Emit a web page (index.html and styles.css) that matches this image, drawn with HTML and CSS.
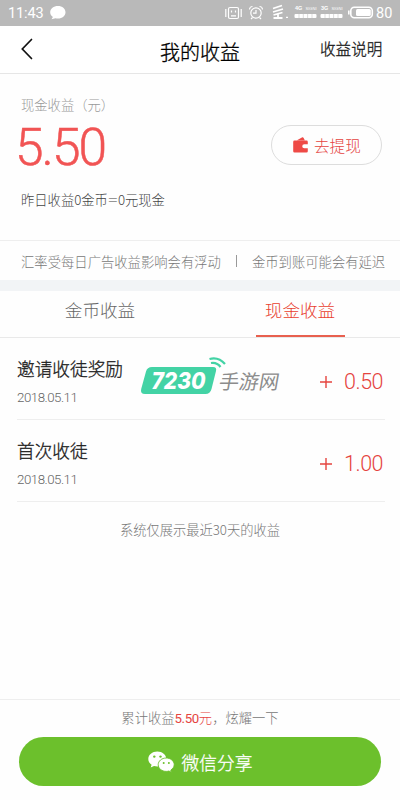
FILE: index.html
```html
<!DOCTYPE html>
<html lang="zh-CN">
<head>
<meta charset="utf-8">
<title>我的收益</title>
<link rel="stylesheet" href="styles.css">
</head>
<body>
<div class="status">
  <span class="time">11:43</span>
  <svg class="bubble" width="16" height="14" viewBox="0 0 16 14"><path fill="#fff" d="M8 0C3.600 0 .2 2.700 .2 6.200c0 2 1 3.700 2.700 4.800L1.500 13.200l4-1c.8.200 1.600.3 2.500.3 4.300 0 7.500-2.800 7.500-6.300S12.300 0 8 0z"/></svg>
  <svg class="icons" width="157" height="20" viewBox="0 0 157 20" fill="none" stroke="#fff" stroke-width="1.200">
    <rect x="3.500" y="7.500" width="10" height="11" rx="1.500"/>
    <path d="M.8 9v8M16.200 9v8M6.500 10.500v2M10.500 10.500v2M6 15.800h5"/>
    <circle cx="31" cy="13" r="5.200"/>
    <path d="M31 10v3.200h-3M24.500 9.500a3 3 0 0 1 3-3M37.500 9.500a3 3 0 0 0-3-3M27.500 17.500l-1.500 1.500M34.500 17.500l1.500 1.500"/>
    <path stroke-width="1.800" d="M48 8.500l9-3M48 12l10-3M48.500 15l9-2.500M53 14v4M48.500 18h9"/>
    <path d="M61 17.300h2"/>
    <g fill="#fff" stroke="none"><text x="70" y="10" class="net">4G</text><text x="80.500" y="10" class="sig" textLength="11">SIGNI</text><text x="96" y="10" class="net">3G</text><text x="106.500" y="10" class="sig" textLength="11">SIGNI</text>
      <rect x="69.500" y="14" width="22" height="4" rx="1"/><rect x="95.500" y="14" width="22" height="4" rx="1"/></g>
    <path stroke="#b9b9b9" stroke-width=".5" d="M74 14v4M78.300 14v4M82.600 14v4M87 14v4M100 14v4M104.300 14v4M108.600 14v4M113 14v4"/>
    <rect x="125.800" y="7.300" width="21.500" height="10.400" rx="3.500" stroke-width="1.600"/>
    <rect x="131" y="9" width="14.800" height="7" rx="1.500" fill="#fff" stroke="none"/>
    <path d="M123.800 10.500v4" stroke-width="1.600"/>
  </svg>
  <span class="pct">80</span>
</div>
<header class="nav">
  <svg class="back" width="12" height="22" viewBox="0 0 12 22"><path d="M10.500 1.500L1.300 11l9.200 9.500" fill="none" stroke="#111" stroke-width="1.700" stroke-linecap="round"/></svg>
  <h1>我的收益</h1>
  <a class="help">收益说明</a>
</header>
<section class="balance">
  <div>
    <div class="label">现金收益（元）</div>
    <div class="amount">5.50</div>
    <div class="yesterday">昨日收益<i>0</i>金币<i class="eq">=</i><i>0</i>元现金</div>
  </div>
  <a class="withdraw">
    <svg width="15" height="16" viewBox="0 0 15 16"><path fill="#ee4a46" d="M4 3.200L9.300.3q.8-.3 1.200.4l1.300 2.500zM1.500 3.600h12q1.300 0 1.300 1.300v2.300h-3.500a2 2 0 0 0 0 4.100h3.500v2.900q0 1.300-1.300 1.300h-12Q.2 15.500.2 14.200V4.900q0-1.300 1.300-1.300z"/></svg>
    <span>去提现</span>
  </a>
</section>
<div class="notice"><span>汇率受每日广告收益影响会有浮动</span><b></b><span>金币到账可能会有延迟</span></div>
<nav class="tabs"><div class="tab"><span>金币收益</span></div><div class="tab on"><span>现金收益</span></div></nav>
<main>
  <div class="row"><div><div class="name">邀请收徒奖励</div><div class="date">2018.05.11</div></div><div class="gain"><svg width="12" height="12" viewBox="0 0 12 12"><path d="M6 0v12M0 6h12" stroke="#e5443f" stroke-width="1.400"/></svg><span>0.50</span></div></div>
  <div class="row"><div><div class="name">首次收徒</div><div class="date">2018.05.11</div></div><div class="gain"><svg width="12" height="12" viewBox="0 0 12 12"><path d="M6 0v12M0 6h12" stroke="#e5443f" stroke-width="1.400"/></svg><span>1.00</span></div></div>
  <p class="tip">系统仅展示最近30天的收益</p>
  <svg class="mark" width="150" height="50" viewBox="0 0 150 50">
    <path fill="#43d3a5" d="M12 10h61q4 0 3 4l-4.500 18q-1.300 5-6 5H5q-5 0-3.800-5L6 14.500Q7.200 10 12 10z"/>
    <text x="11.500" y="31.500" class="num" textLength="54" lengthAdjust="spacingAndGlyphs">7230</text>
    <g fill="none" stroke="#43d3a5" stroke-width="2.200"><path d="M69.500 2q9-2.500 15.500 5M71 6q6-1 9.500 4"/></g>
    <text transform="translate(78 31.500) skewX(-10)" class="site" textLength="60" lengthAdjust="spacingAndGlyphs">手游网</text>
  </svg>
</main>
<footer>
  <div class="total">累计收益<em><i>5.50</i>元</em>，炫耀一下</div>
  <a class="share">
    <svg width="27" height="22" viewBox="0 0 27 22"><path fill="#fff" d="M9.300.5C4.300.5.3 3.700.3 8c0 2.400 1.300 4.400 3.300 5.800l-.9 2.800 3.300-1.600c1.200.3 2.200.5 3.300.5 5 0 9-3.300 9-7.500S14.300.5 9.300.5z"/><path fill="#fff" stroke="#6cc02c" stroke-width=".9" d="M18.200 7c-4.400 0-8 3-8 6.700s3.600 6.700 8 6.700c.9 0 1.800-.1 2.700-.4l2.500 1.300-.6-2.300c2-1.300 3.400-3.100 3.400-5.300 0-3.700-3.600-6.700-8-6.700z"/><g fill="#6cc02c"><circle cx="6.300" cy="5.600" r="1.200"/><circle cx="12.500" cy="5.600" r="1.200"/><circle cx="15.700" cy="12" r="1"/><circle cx="20.900" cy="12" r="1"/></g></svg>
    <span>微信分享</span>
  </a>
</footer>
</body>
</html>
```
FILE: styles.css
```css
* { box-sizing: border-box; }
body {
  margin: 0;
  width: 400px;
  height: 800px;
  overflow: hidden;
  display: flex;
  flex-direction: column;
  background: #fefefe;
  color: #1c1c1c;
  font-family: "Noto Sans CJK SC", sans-serif;
  font-weight: 300;
  white-space: nowrap;
}
svg { display: block; flex: none; }
.status {
  height: 26px;
  flex: none;
  display: flex;
  align-items: flex-start;
  padding-left: 8px;
  background: #b9b9b9;
  color: #fff;
}
.time, .pct { font-family: Roboto, sans-serif; font-weight: 400; line-height: 28px; }
.time { width: 42px; font-size: 14.500px; letter-spacing: -.1px; }
.bubble { margin-top: 6px; }
.icons { margin-left: 159px; }
.net { font: bold 5.500px "Liberation Sans", sans-serif; }
.sig { font: 4px "Liberation Sans", sans-serif; }
.pct { font-size: 14.500px; margin-left: -6px; }
.nav {
  height: 48px;
  flex: none;
  display: grid;
  grid-template-columns: 100px 200px 100px;
  align-items: center;
  border-bottom: 1px solid #e6e6e6;
  background: #fff;
}
.back { margin: -2px 0 0 21px; }
h1, .help, .name, .share { font-weight: 300; -webkit-text-stroke: .3px currentColor; }
h1 { margin: 4px 0 0; font-size: 20px; line-height: 30px; text-align: center; color: #000; }
.help { font-size: 15.600px; line-height: 24px; padding-left: 20px; margin-top: -3px; }
.balance {
  height: 167px;
  flex: none;
  display: flex;
  justify-content: space-between;
  padding: 21px 18px 0 21px;
  border-bottom: 1px solid #eee;
}
.label { font-size: 13.300px; line-height: 20px; color: #999; }
.amount {
  height: 66px;
  padding-top: 3px;
  margin-left: -6px;
  font-family: Roboto, sans-serif;
  font-size: 51.500px;
  line-height: 60px;
  letter-spacing: -2px;
  color: #f15454;
  -webkit-text-stroke: .5px #f15454;
}
.yesterday { font-size: 13.300px; line-height: 20px; margin-top: 9px; color: #444; }
i { font-style: normal; }
.eq { display: inline-block; width: 10px; text-align: center; transform: scaleX(1.300); }
.withdraw {
  width: 111px;
  height: 40px;
  margin-top: 30px;
  border: 1px solid #ddd;
  border-radius: 20px;
  display: flex;
  align-items: center;
  padding-left: 21px;
  gap: 6px;
  color: #e5443f;
  font-size: 15.600px;
}
.notice {
  height: 39px;
  flex: none;
  display: flex;
  align-items: center;
  padding: 1px 0 0 21px;
  font-size: 13.330px;
  color: #777;
}
.notice b { width: 1px; height: 12px; margin: 0 15px; background: #999; }
.tabs {
  height: 58px;
  flex: none;
  display: flex;
  border-top: 11px solid #f2f4f6;
  border-bottom: 1px solid #e9e9e9;
  color: #666;
}
.tab { width: 200px; display: flex; justify-content: center; font-size: 17.600px; line-height: 38px; }
.tab span { width: 89px; text-align: center; }
.on span { color: #e8402e; border-bottom: 2px solid #e8604f; }
main { position: relative; padding: 0 15px 0 17px; flex: 1; }
.row {
  height: 82px;
  display: flex;
  justify-content: space-between;
  padding-top: 17px;
  border-bottom: 1px solid #eee;
}
.name { font-size: 17.670px; line-height: 28px; }
.date { font: 300 13.300px/20px Roboto, sans-serif; margin-top: 5px; letter-spacing: -.5px; color: #666; }
.gain {
  display: flex;
  align-items: center;
  height: 53px;
  gap: 12px;
  font-family: Roboto, sans-serif;
  font-size: 21.500px;
  letter-spacing: -.5px;
  padding-right: 2px;
  color: #e5443f;
}
.tip { margin: 18px 0 0; font-size: 13.300px; line-height: 20px; text-align: center; color: #777; letter-spacing: -.05px; padding-right: 2px; }
.mark { position: absolute; left: 140px; top: 19px; overflow: visible; }
.num { font: italic 800 23px "Inter", sans-serif; fill: #fff; }
.site { font-size: 20px; font-weight: 400; fill: #8c8c8c; }
footer { height: 101px; flex: none; border-top: 1px solid #eee; padding: 8px 19px 0; }
.total { font-size: 13.300px; line-height: 20px; text-align: center; color: #777; }
.total em { font-style: normal; color: #e5443f; }
.total i { font-family: Roboto, sans-serif; font-weight: 400; letter-spacing: -.4px; }
.share {
  height: 49px;
  margin-top: 8px;
  border-radius: 25px;
  background: #6cc02c;
  color: #fff;
  display: flex;
  align-items: center;
  justify-content: center;
  gap: 7px;
  font-size: 17.700px;
}
```
